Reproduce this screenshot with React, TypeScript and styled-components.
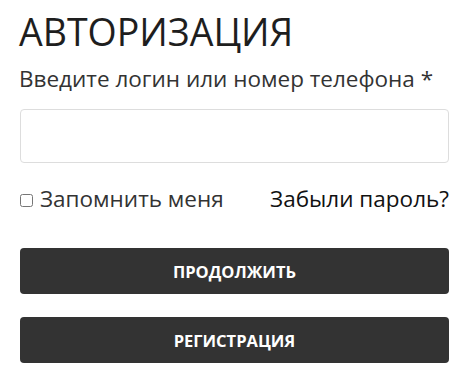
import React from "react";
import styled, { createGlobalStyle } from "styled-components";

const GlobalStyle = createGlobalStyle`
  html, body {
    margin: 0;
    padding: 0;
    background: #fff;
  }
  body {
    font-family: "Open Sans", "Noto Sans", sans-serif;
    color: #333;
  }
`;

const Form = styled.form`
  display: flex;
  flex-direction: column;
  padding: 6px 12px 0 20px;
`;

const Title = styled.h1`
  margin: 0 0 6px -1px;
  font-size: 37.5px;
  font-weight: 500;
  line-height: normal;
  color: #1e1e1e;
`;

const Label = styled.label`
  font-size: 22.5px;
  line-height: normal;
  margin: 0 0 15px -1px;
`;

const Input = styled.input`
  box-sizing: border-box;
  height: 54px;
  width: 100%;
  border: 1px solid #ddd;
  border-radius: 4px;
  padding: 0 12px;
  font: inherit;
  font-size: 18px;
  outline: none;
`;

const Row = styled.div`
  display: flex;
  align-items: center;
  justify-content: space-between;
  margin-top: 22px;
`;

const Remember = styled.label`
  display: flex;
  align-items: center;
  gap: 7px;
  font-size: 22.5px;
  line-height: 27px;
`;

const Check = styled.input`
  margin: 3px 0 0;
  width: 13px;
  height: 13px;
`;

const Forgot = styled.a`
  font-size: 22.5px;
  line-height: 27px;
  color: #111;
  text-decoration: none;
`;

const Button = styled.button<{ $gap: number }>`
  box-sizing: border-box;
  height: 46px;
  width: 100%;
  margin-top: ${(p) => p.$gap}px;
  border: none;
  border-radius: 4px;
  background: #333;
  color: #fff;
  font-family: "Open Sans", sans-serif;
  font-size: 16.5px;
  font-weight: 700;
  text-transform: uppercase;
  cursor: pointer;
`;

export default function App() {
  return (
    <>
      <GlobalStyle />
      <Form onSubmit={(e) => e.preventDefault()}>
        <Title>АВТОРИЗАЦИЯ</Title>
        <Label htmlFor="login">Введите логин или номер телефона *</Label>
        <Input id="login" type="text" />
        <Row>
          <Remember>
            <Check type="checkbox" />
            Запомнить меня
          </Remember>
          <Forgot href="#">Забыли пароль?</Forgot>
        </Row>
        <Button type="submit" $gap={36}>Продолжить</Button>
        <Button type="button" $gap={23}>Регистрация</Button>
      </Form>
    </>
  );
}
